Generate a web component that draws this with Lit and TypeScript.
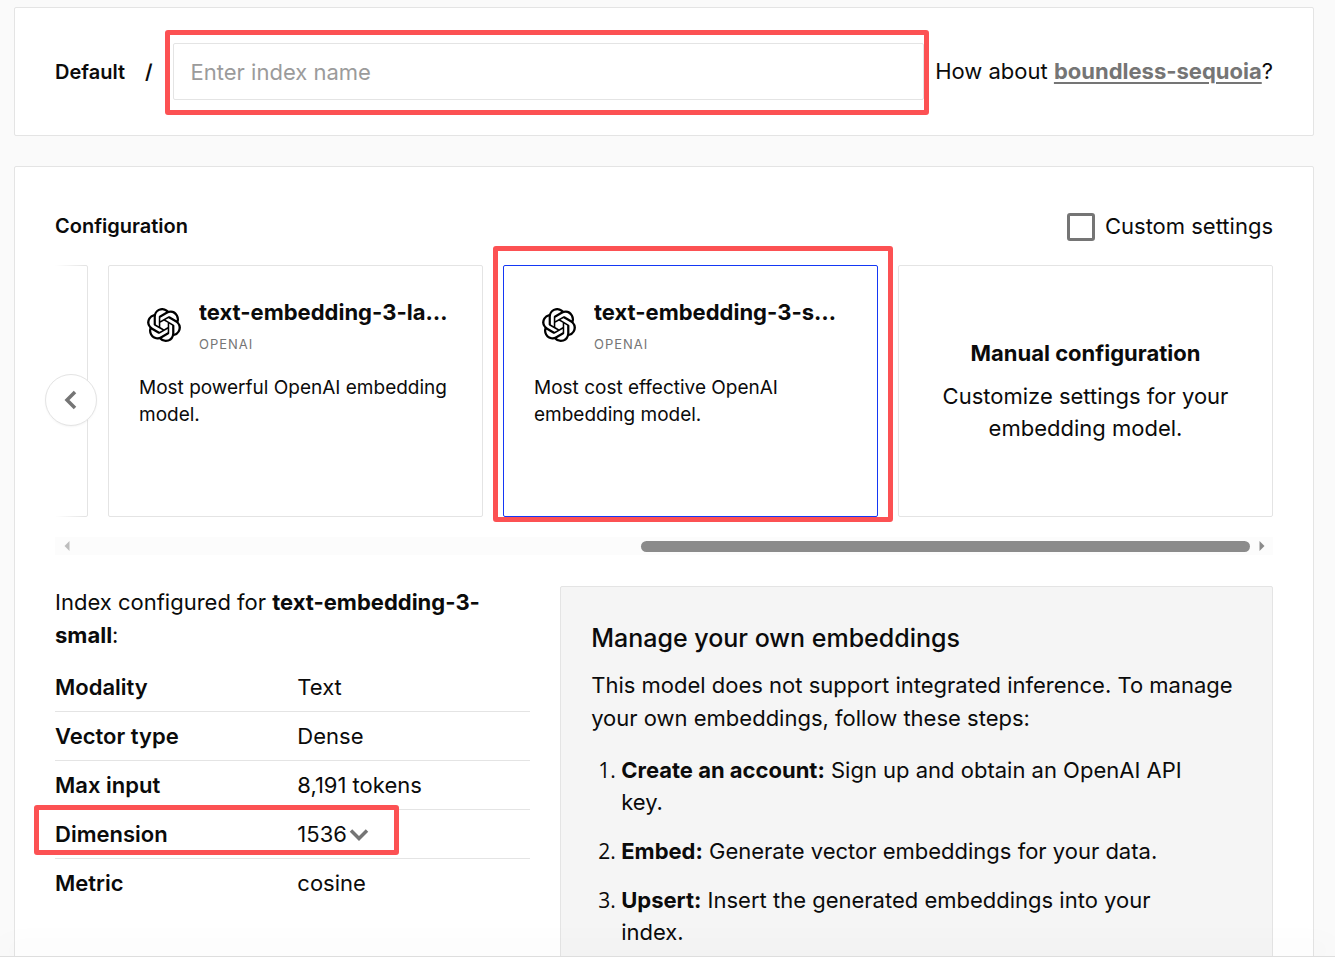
import { LitElement, html, css, svg } from "lit";
import { customElement, state } from "lit/decorators.js";
import { classMap } from "lit/directives/class-map.js";

const openAiMark = svg`<path d="M22.2819 9.8211a5.9847 5.9847 0 0 0-.5157-4.9108 6.0462 6.0462 0 0 0-6.5098-2.9A6.0651 6.0651 0 0 0 4.9807 4.1818a5.9847 5.9847 0 0 0-3.9977 2.9 6.0462 6.0462 0 0 0 .7427 7.0966 5.98 5.98 0 0 0 .511 4.9107 6.051 6.051 0 0 0 6.5146 2.9001A5.9847 5.9847 0 0 0 13.2599 24a6.0557 6.0557 0 0 0 5.7718-4.2058 5.9894 5.9894 0 0 0 3.9977-2.9001 6.0557 6.0557 0 0 0-.7475-7.0729zm-9.022 12.6081a4.4755 4.4755 0 0 1-2.8764-1.0408l.1419-.0804 4.7783-2.7582a.7948.7948 0 0 0 .3927-.6813v-6.7369l2.02 1.1686a.071.071 0 0 1 .038.052v5.5826a4.504 4.504 0 0 1-4.4945 4.4944zm-9.6607-4.1254a4.4708 4.4708 0 0 1-.5346-3.0137l.142.0852 4.783 2.7582a.7712.7712 0 0 0 .7806 0l5.8428-3.3685v2.3324a.0804.0804 0 0 1-.0332.0615L9.74 19.9502a4.4992 4.4992 0 0 1-6.1408-1.6464zM2.3408 7.8956a4.485 4.485 0 0 1 2.3655-1.9728V11.6a.7664.7664 0 0 0 .3879.6765l5.8144 3.3543-2.0201 1.1685a.0757.0757 0 0 1-.071 0l-4.8303-2.7865A4.504 4.504 0 0 1 2.3408 7.872zm16.5963 3.8558L13.1038 8.364 15.1192 7.2a.0757.0757 0 0 1 .071 0l4.8303 2.7913a4.4944 4.4944 0 0 1-.6765 8.1042v-5.6772a.79.79 0 0 0-.407-.667zm2.0107-3.0231l-.142-.0852-4.7735-2.7818a.7759.7759 0 0 0-.7854 0L9.409 9.2297V6.8974a.0662.0662 0 0 1 .0284-.0615l4.8303-2.7866a4.4992 4.4992 0 0 1 6.6802 4.66zM8.3065 12.863l-2.02-1.1638a.0804.0804 0 0 1-.038-.0567V6.0742a4.4992 4.4992 0 0 1 7.3757-3.4537l-.142.0805L8.704 5.459a.7948.7948 0 0 0-.3927.6813zm1.0976-2.3654l2.602-1.4998 2.6069 1.4998v2.9994l-2.5974 1.4997-2.6067-1.4997Z"/>`;

interface Model {
  id: string;
  vendor: string;
  description: string;
}

const models: Model[] = [
  {
    id: "text-embedding-3-large",
    vendor: "OpenAI",
    description: "Most powerful OpenAI embedding model.",
  },
  {
    id: "text-embedding-3-small",
    vendor: "OpenAI",
    description: "Most cost effective OpenAI embedding model.",
  },
];

const steps = [
  { title: "Create an account:", text: "Sign up and obtain an OpenAI API key." },
  { title: "Embed:", text: "Generate vector embeddings for your data." },
  { title: "Upsert:", text: "Insert the generated embeddings into your index." },
];

@customElement("app-root")
export class AppRoot extends LitElement {
  @state() private selected = "text-embedding-3-small";

  static styles = css`
    :host {
      display: flex;
      flex-direction: column;
      height: 100vh;
      background: #fafafa;
      color: #0b0b0b;
      font-family: Inter, "Liberation Sans", sans-serif;
      font-size: 22px;
      line-height: 33px;
    }
    *,
    *::before,
    *::after {
      box-sizing: border-box;
    }
    h2,
    h3,
    p,
    ol {
      margin: 0;
    }
    strong {
      font-weight: 700;
    }
    button,
    input,
    select {
      font: inherit;
      color: inherit;
      margin: 0;
    }
    .content {
      flex: 1;
      min-height: 0;
      overflow: hidden;
      padding: 7px 21px 0 14px;
    }
    .panel {
      background: #fff;
      border: 1px solid #e4e4e4;
      border-radius: 2px;
      padding: 35px 40px;
    }
    .name-panel {
      display: flex;
      align-items: center;
      margin-bottom: 30px;
    }
    .crumb,
    .slash {
      font-size: 20px;
      line-height: 34px;
      font-weight: 600;
    }
    .slash {
      margin: 0 20px;
    }
    .field {
      position: relative;
      flex: 1;
      min-width: 0;
      margin-right: 11px;
    }
    .name-input {
      display: block;
      width: 100%;
      height: 57px;
      padding: 0 17px;
      border: 1px solid #e4e4e4;
      border-radius: 2px;
      background: #fff;
      outline: none;
    }
    .name-input::placeholder {
      color: #9b9b9b;
      opacity: 1;
    }
    .mark {
      position: absolute;
      border: 5px solid #fc5153;
      border-radius: 3px;
      pointer-events: none;
      z-index: 2;
    }
    .mark-name {
      inset: -13px -5px -15px -8px;
    }
    .mark-card {
      inset: -20px -16px -6px -11px;
    }
    .mark-row {
      inset: -5px 131px 4px -21px;
    }
    .suggest a {
      color: #757575;
      font-weight: 700;
      text-decoration: underline;
      text-decoration-thickness: 2px;
      text-underline-offset: 3px;
    }
    .head {
      display: flex;
      justify-content: space-between;
      align-items: center;
      margin: 8px 0 22px;
    }
    .head h2 {
      font-size: 20px;
      line-height: 33px;
      font-weight: 600;
    }
    .check {
      display: flex;
      align-items: center;
      gap: 10px;
    }
    .check input {
      appearance: none;
      width: 28px;
      height: 28px;
      border: 3px solid #757575;
      border-radius: 3px;
      background: #fff;
    }
    .carousel {
      position: relative;
    }
    .viewport {
      margin-top: -20px;
      padding-top: 20px;
      padding-bottom: 20px;
      overflow: hidden;
    }
    .track {
      display: flex;
      justify-content: flex-end;
      gap: 20px;
    }
    .card {
      position: relative;
      flex: 0 0 375px;
      min-height: 252px;
      padding: 30px;
      border: 1px solid #e4e4e4;
      border-radius: 2px;
      background: #fff;
      text-align: left;
    }
    .card.selected {
      border-color: #1438f5;
    }
    .fade {
      position: absolute;
      top: 0;
      bottom: 20px;
      left: 0;
      width: 30px;
      background: linear-gradient(90deg, #fff, #fff0);
    }
    .card-button {
      display: flex;
      flex-direction: column;
      gap: 15px;
      font-size: 19px;
      line-height: 27px;
    }
    .card-top {
      display: grid;
      grid-template-columns: 50px minmax(0, 1fr);
      column-gap: 10px;
      align-items: start;
    }
    .logo {
      width: 34px;
      height: 34px;
      margin-top: 12px;
      justify-self: center;
      fill: #000;
    }
    .model {
      display: block;
      overflow: hidden;
      white-space: nowrap;
      text-overflow: ellipsis;
      font-size: 22px;
      line-height: 33px;
      font-weight: 700;
    }
    .vendor {
      display: block;
      font-size: 13px;
      line-height: 30px;
      letter-spacing: 1px;
      text-transform: uppercase;
      color: #757575;
    }
    .manual {
      display: flex;
      flex-direction: column;
      align-items: center;
      justify-content: center;
      gap: 11px;
      padding-bottom: 32px;
      text-align: center;
      line-height: 32px;
    }
    .prev {
      position: absolute;
      left: -10px;
      top: 129px;
      width: 52px;
      height: 52px;
      padding: 0;
      display: grid;
      place-items: center;
      border: 1px solid #e4e4e4;
      border-radius: 50%;
      background: #fff;
      box-shadow: 0 1px 2px #0000000a;
      z-index: 1;
    }
    .chev {
      display: block;
      fill: none;
      stroke: #757575;
      stroke-width: 3.5;
    }
    .scrollbar {
      display: grid;
      grid-template-columns: 23px minmax(0, 1fr) 23px;
      align-items: center;
      height: 18px;
      background: #fcfcfc;
      margin-bottom: 31px;
    }
    .scrollbar svg {
      display: block;
      justify-self: center;
    }
    .thumb {
      justify-self: end;
      width: 52%;
      height: 11px;
      border-radius: 6px;
      background: #8b8b8b;
    }
    .columns {
      display: grid;
      grid-template-columns: minmax(0, 2fr) minmax(0, 3fr);
      gap: 30px;
      align-items: start;
    }
    .specs {
      width: 100%;
      margin-top: 11px;
      border-collapse: separate;
      border-spacing: 0;
      table-layout: fixed;
    }
    .specs tr {
      position: relative;
    }
    .specs th,
    .specs td {
      height: 49px;
      padding: 0;
      border-bottom: 1px solid #e4e4e4;
      text-align: left;
      font-weight: 400;
    }
    .specs th {
      width: 51%;
      font-weight: 600;
    }
    .specs tr:last-child > * {
      border-bottom: 0;
    }
    .dim {
      display: inline-flex;
      align-items: center;
    }
    .dim select {
      appearance: none;
      border: 0;
      padding: 0;
      background: none;
    }
    .help {
      background: #f5f5f5;
      border: 1px solid #e4e4e4;
      border-radius: 2px;
      padding: 30px;
    }
    .help h3 {
      font-size: 25px;
      line-height: 42px;
      font-weight: 500;
      margin-bottom: 10px;
    }
    .help ol {
      margin-top: 19px;
      padding: 0 30px;
      display: flex;
      flex-direction: column;
      gap: 17px;
      line-height: 32px;
    }
    .help li::marker {
      font-family: "Open Sans", "Noto Sans", sans-serif;
      font-size: 21px;
    }
    .footer {
      position: relative;
      height: 5px;
      border-top: 1px solid #dedede;
      background: #fff;
      box-shadow: 0 -8px 30px #00000014;
    }
  `;

  private card(m: Model) {
    const on = this.selected === m.id;
    return html`<button
      type="button"
      class=${classMap({ card: true, "card-button": true, selected: on })}
      aria-pressed=${on}
      @click=${() => (this.selected = m.id)}
    >
      <span class="card-top">
        <svg class="logo" viewBox="0 0 24 24" aria-hidden="true">${openAiMark}</svg>
        <span class="names">
          <span class="model">${m.id}</span>
          <span class="vendor">${m.vendor}</span>
        </span>
      </span>
      <span>${m.description}</span>
      ${on ? html`<span class="mark mark-card"></span>` : ""}
    </button>`;
  }

  render() {
    return html`
      <main class="content">
        <section class="panel name-panel">
          <span class="crumb">Default</span>
          <span class="slash">/</span>
          <div class="field">
            <input class="name-input" type="text" placeholder="Enter index name" aria-label="Index name" />
            <span class="mark mark-name"></span>
          </div>
          <span class="suggest">How about <a href="#">boundless-sequoia</a>?</span>
        </section>

        <section class="panel">
          <div class="head">
            <h2>Configuration</h2>
            <label class="check"><input type="checkbox" />Custom settings</label>
          </div>

          <div class="carousel">
            <button class="prev" type="button" aria-label="Previous">
              <svg class="chev" width="26" height="26" viewBox="0 0 26 26"><path d="M17 5 9 13l8 8" /></svg>
            </button>
            <div class="viewport">
              <div class="track">
                <div class="card"></div>
                ${models.map((m) => this.card(m))}
                <button type="button" class="card manual">
                  <strong>Manual configuration</strong>
                  <span>Customize settings for your embedding model.</span>
                </button>
              </div>
            </div>
            <div class="fade"></div>
          </div>

          <div class="scrollbar">
            <svg width="6" height="10" viewBox="0 0 6 10"><path d="M5.500 0v10L.5 5z" fill="#bdbdbd" /></svg>
            <div class="thumb"></div>
            <svg width="6" height="10" viewBox="0 0 6 10"><path d="M.5 0v10l5-5z" fill="#8b8b8b" /></svg>
          </div>

          <div class="columns">
            <div>
              <p>Index configured for <strong>${this.selected}</strong>:</p>
              <table class="specs">
                <tbody>
                  <tr><th scope="row">Modality</th><td>Text</td></tr>
                  <tr><th scope="row">Vector type</th><td>Dense</td></tr>
                  <tr><th scope="row">Max input</th><td>8,191 tokens</td></tr>
                  <tr>
                    <th scope="row"><label for="dimension">Dimension</label><span class="mark mark-row"></span></th>
                    <td>
                      <span class="dim">
                        <select id="dimension"><option>1536</option></select>
                        <svg class="chev" width="26" height="26" viewBox="0 0 26 26"><path d="m4 9.500 8 8 8-8" /></svg>
                      </span>
                    </td>
                  </tr>
                  <tr><th scope="row">Metric</th><td>cosine</td></tr>
                </tbody>
              </table>
            </div>
            <aside class="help">
              <h3>Manage your own embeddings</h3>
              <p>This model does not support integrated inference. To manage your own embeddings, follow these steps:</p>
              <ol>
                ${steps.map((s) => html`<li><strong>${s.title}</strong> ${s.text}</li>`)}
              </ol>
            </aside>
          </div>
        </section>
      </main>
      <div class="footer"></div>
    `;
  }
}
